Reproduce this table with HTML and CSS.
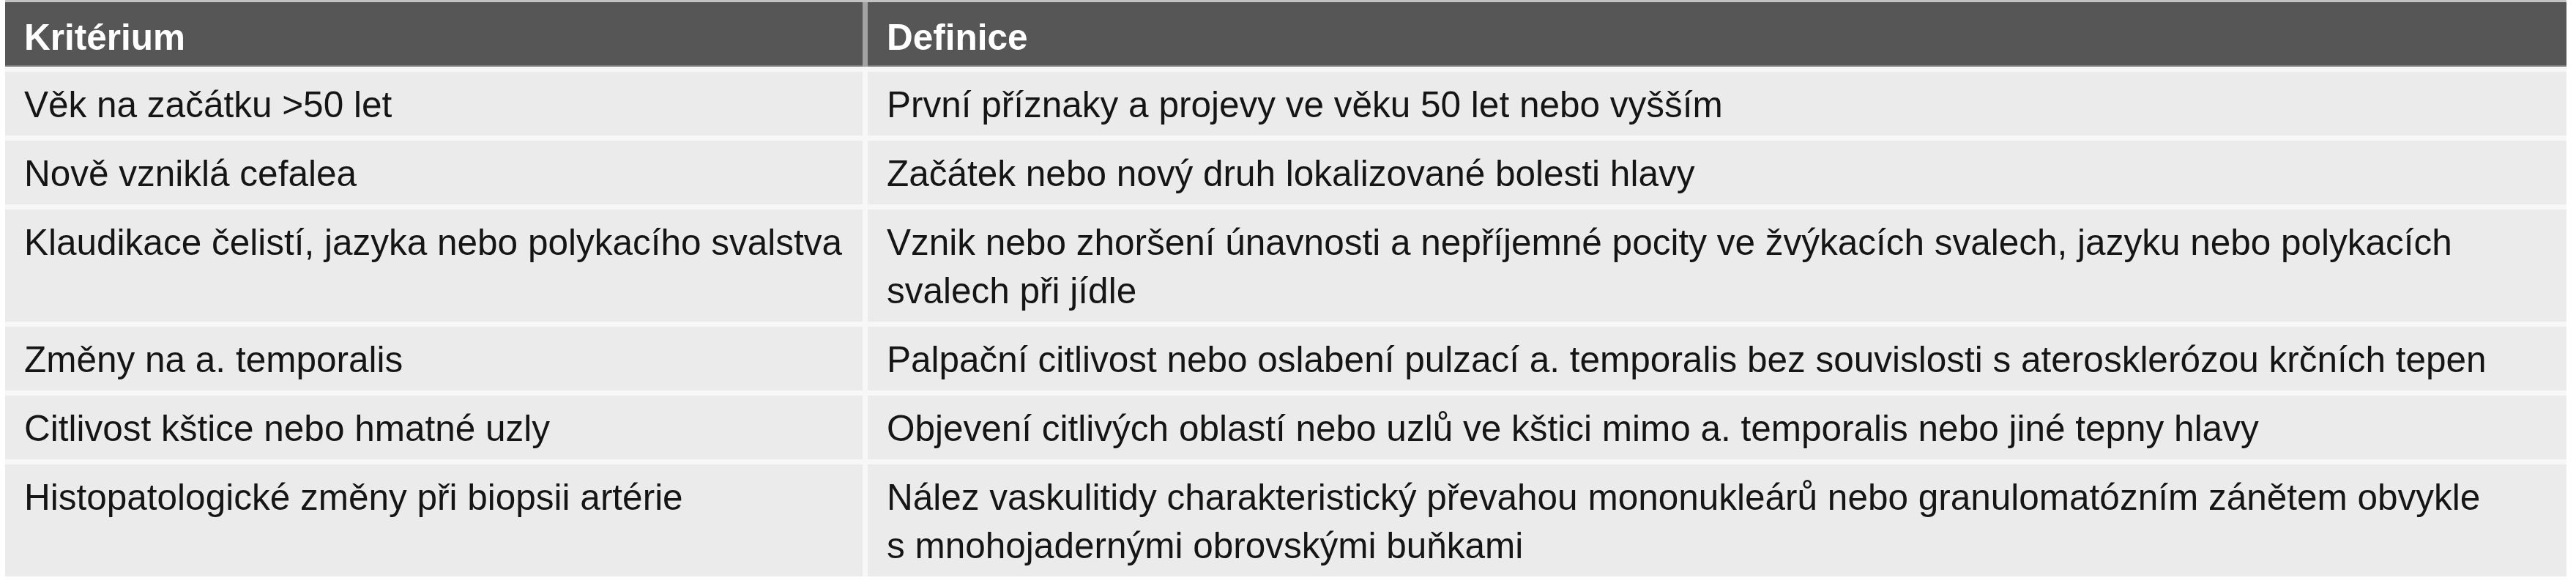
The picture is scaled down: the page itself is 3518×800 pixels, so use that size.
FILE: index.html
```html
<!DOCTYPE html>
<html lang="cs">
<head>
<meta charset="utf-8">
<title>Kritéria</title>
<link rel="stylesheet" href="styles.css">
</head>
<body>
<div class="table">
  <div class="row head">
    <div class="cell">Kritérium</div>
    <div class="cell">Definice</div>
  </div>
  <div class="row">
    <div class="cell">Věk na začátku &gt;50 let</div>
    <div class="cell">První příznaky a projevy ve věku 50 let nebo vyšším</div>
  </div>
  <div class="row">
    <div class="cell">Nově vzniklá cefalea</div>
    <div class="cell">Začátek nebo nový druh lokalizované bolesti hlavy</div>
  </div>
  <div class="row">
    <div class="cell">Klaudikace čelistí, jazyka nebo polykacího svalstva</div>
    <div class="cell">Vznik nebo zhoršení únavnosti a nepříjemné pocity ve žvýkacích svalech, jazyku nebo polykacích<br>svalech při jídle</div>
  </div>
  <div class="row">
    <div class="cell">Změny na a. temporalis</div>
    <div class="cell">Palpační citlivost nebo oslabení pulzací a. temporalis bez souvislosti s aterosklerózou krčních tepen</div>
  </div>
  <div class="row">
    <div class="cell">Citlivost kštice nebo hmatné uzly</div>
    <div class="cell">Objevení citlivých oblastí nebo uzlů ve kštici mimo a. temporalis nebo jiné tepny hlavy</div>
  </div>
  <div class="row">
    <div class="cell">Histopatologické změny při biopsii artérie</div>
    <div class="cell">Nález vaskulitidy charakteristický převahou mononukleárů nebo granulomatózním zánětem obvykle<br>s&nbsp;mnohojadernými obrovskými buňkami</div>
  </div>
</div>
</body>
</html>
```

FILE: styles.css
```css
html, body {
  margin: 0;
  padding: 0;
  background: #ffffff;
}

body {
  font-family: "Liberation Sans", Arial, sans-serif;
  font-size: 49.5px;
  color: #151515;
}

.table {
  margin-left: 7px;
  width: 3498px;
  display: flex;
  flex-direction: column;
  gap: 6.5px;
  background: #f7f7f7;
  border-top: 3px solid #c3c3c3;
}

.row {
  display: grid;
  grid-template-columns: 1171px 2320px;
  column-gap: 7px;
}

.cell {
  background: #ebebeb;
  line-height: 66px;
  padding: 12px 26px 9.5px 26px;
  white-space: nowrap;
}

.row.head {
  background: #a3a3a3;
}

.head .cell {
  background: #565656;
  color: #ffffff;
  font-weight: bold;
  padding: 14.5px 26px 7.5px 26px;
  box-shadow: inset 0 -2px 0 #7c7c7c;
}
```
